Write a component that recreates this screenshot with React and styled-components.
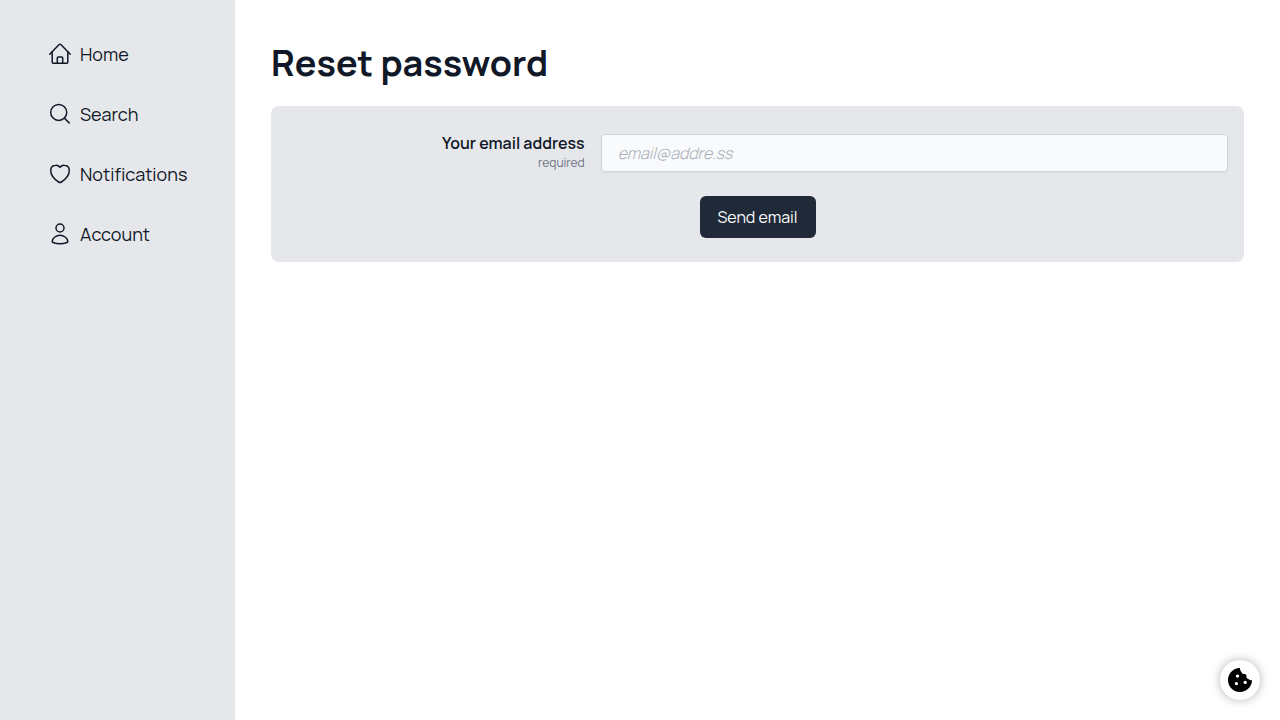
import React from "react";
import styled, { createGlobalStyle } from "styled-components";

const GlobalStyle = createGlobalStyle`
  *, *::before, *::after { box-sizing: border-box; }
  body {
    margin: 0;
    background: #fff;
    color: #111827;
    font-family: Manrope, Inter, "Liberation Sans", sans-serif;
    font-size: 16px;
    line-height: 24px;
  }
`;

const Page = styled.div`
  display: flex;
  min-height: 100vh;
`;

const Sidebar = styled.nav`
  flex: 0 0 235px;
  padding: 40px 36px 40px 48px;
  background: #e5e7eb;
`;

const NavList = styled.ul`
  display: flex;
  flex-direction: column;
  gap: 32px;
  margin: 0;
  padding: 0;
  list-style: none;
`;

const NavLink = styled.a`
  display: flex;
  align-items: center;
  gap: 8px;
  height: 28px;
  color: #111827;
  font-size: 18px;
  line-height: 28px;
  font-weight: 400;
  text-decoration: none;
`;

const Icon = styled.svg`
  flex: none;
  width: 24px;
  height: 24px;
  fill: none;
  stroke: currentColor;
  stroke-width: 1.5;
  stroke-linecap: round;
  stroke-linejoin: round;
`;

const Main = styled.main`
  flex: 1;
  min-width: 0;
  padding: 40px 36px;
`;

const Title = styled.h1`
  margin: 0 0 20px;
  font-size: 36px;
  line-height: 46px;
  font-weight: 700;
`;

const Form = styled.form`
  display: flex;
  flex-direction: column;
  align-items: center;
  gap: 20px;
  padding: 24px 16px;
  border-radius: 8px;
  background: #e5e7eb;
`;

const Field = styled.div`
  display: flex;
  align-items: center;
  width: 100%;
`;

const Label = styled.label`
  display: flex;
  flex-direction: column;
  width: 33.333%;
  padding: 0 16px 4px 0;
  text-align: right;
  line-height: 24px;
  font-weight: 600;
`;

const Hint = styled.span`
  color: #6b7280;
  font-size: 12px;
  line-height: 16px;
  font-weight: 400;
`;

const TextInput = styled.input`
  flex: 1;
  min-width: 0;
  height: 38px;
  margin: 4px 0;
  padding: 0 16px;
  border: 1px solid #d1d5db;
  border-radius: 4px;
  background: #f9fafb;
  box-shadow: 0 1px 2px rgba(0, 0, 0, 0.05);
  color: #111827;
  font: inherit;

  &::placeholder {
    color: #a8adb8;
    font-style: italic;
    font-weight: 300;
    opacity: 1;
  }
`;

const SubmitButton = styled.button`
  min-width: 116px;
  height: 42px;
  padding: 0 16px;
  border: 0;
  border-radius: 6px;
  background: #1f2937;
  color: #f9fafb;
  font: inherit;
  cursor: pointer;
`;

const CookieButton = styled.button`
  position: fixed;
  right: 20px;
  bottom: 20px;
  display: grid;
  place-items: center;
  width: 40px;
  height: 40px;
  padding: 0;
  border: 0;
  border-radius: 50%;
  background: #fff;
  box-shadow: 0 0 10px rgba(0, 0, 0, 0.3);
  color: #000;
  cursor: pointer;
`;

const links = [
  {
    label: "Home",
    drawing: (
      <>
        <path d="M1.8 12.2 10.9 2.8a1.6 1.6 0 0 1 2.2 0l9.1 9.4" />
        <path d="M4.2 9.8v10.4a1 1 0 0 0 1 1h13.6a1 1 0 0 0 1-1V9.8" />
        <path d="M9.3 21.2v-5.1a1 1 0 0 1 1-1h3.4a1 1 0 0 1 1 1v5.1" />
      </>
    ),
  },
  {
    label: "Search",
    drawing: (
      <>
        <circle cx="10.7" cy="10.4" r="8" />
        <path d="m16.4 16.1 4.9 4.9" />
      </>
    ),
  },
  {
    label: "Notifications",
    drawing: (
      <path d="M12 5.2C10.7 3.6 9.2 3 7.5 3.2 4.6 3.4 2.7 5.7 2.7 8.6c0 4.8 4.1 9 7.9 11.4a2.6 2.6 0 0 0 2.8 0c3.8-2.4 7.9-6.6 7.9-11.4 0-2.9-1.9-5.2-4.8-5.4-1.7-.2-3.2.4-4.5 2Z" />
    ),
  },
  {
    label: "Account",
    drawing: (
      <>
        <circle cx="12" cy="6" r="4" />
        <path d="M4.2 19.3c.6-3.4 3.9-6 7.8-6s7.2 2.6 7.8 6c.1.6-.2 1-.8 1.2-4.3 1.5-9.7 1.5-14 0-.6-.2-.9-.6-.8-1.2Z" />
      </>
    ),
  },
];

export default function App() {
  return (
    <>
      <GlobalStyle />
      <Page>
        <Sidebar>
          <NavList>
            {links.map(({ label, drawing }) => (
              <li key={label}>
                <NavLink href="#">
                  <Icon viewBox="0 0 24 24" aria-hidden="true">{drawing}</Icon>
                  {label}
                </NavLink>
              </li>
            ))}
          </NavList>
        </Sidebar>
        <Main>
          <Title>Reset password</Title>
          <Form onSubmit={(event) => event.preventDefault()}>
            <Field>
              <Label htmlFor="email">
                Your email address
                <Hint>required</Hint>
              </Label>
              <TextInput id="email" type="email" placeholder="email@addre.ss" required />
            </Field>
            <SubmitButton type="submit">Send email</SubmitButton>
          </Form>
        </Main>
      </Page>
      <CookieButton type="button" aria-label="Cookie settings">
        <svg width="24" height="24" viewBox="0 0 24 24" aria-hidden="true">
          <path
            fill="currentColor"
            fillRule="evenodd"
            d="M12 0A12 12 0 1 0 24 12.2c-1.6.2-3-.3-4-1.400-1-.2-1.700-1-1.500-2.200.1-1.300-.5-2.200-1.600-2.500-1.900.1-3.100-.6-3.500-2.100C12.400 3 11.800 1.400 12 0ZM9.500 6.400a1.700 1.700 0 1 1 0 3.400 1.700 1.700 0 0 1 0-3.400ZM8.400 13.900a1.700 1.700 0 1 1 0 3.400 1.700 1.700 0 0 1 0-3.400ZM17.200 12.700a1.700 1.700 0 1 1 0 3.400 1.700 1.700 0 0 1 0-3.400Z"
          />
        </svg>
      </CookieButton>
    </>
  );
}
